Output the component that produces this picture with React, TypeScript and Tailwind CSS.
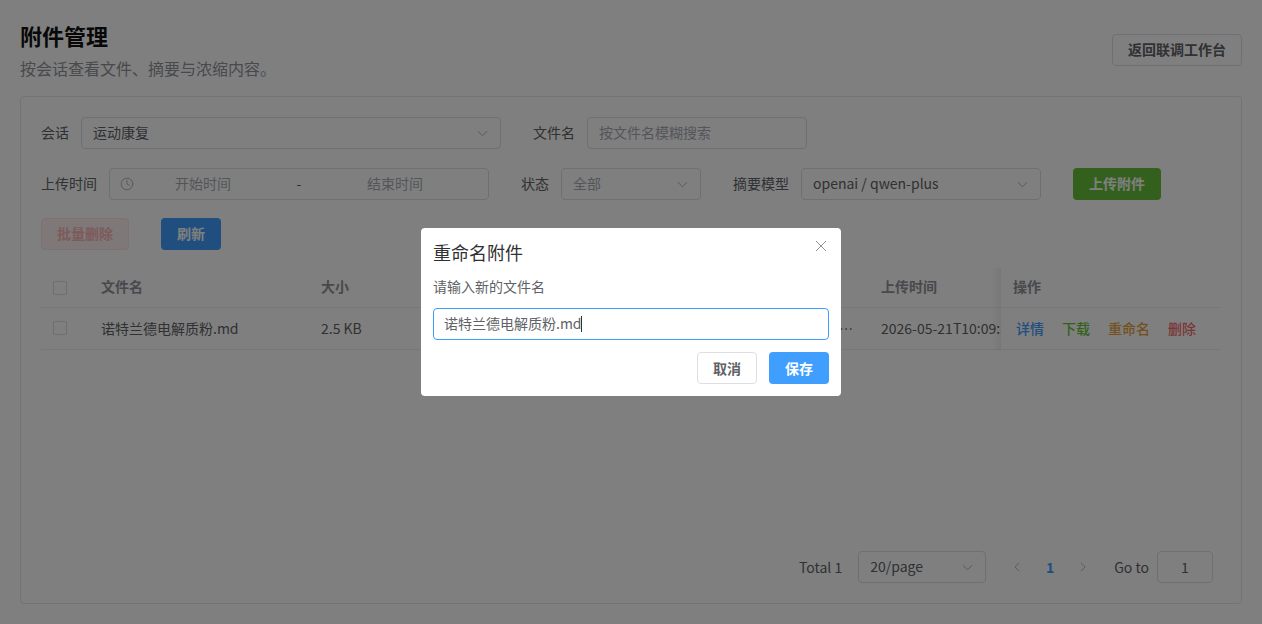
import { Clock } from "lucide-react";

function Arrow({ className }: { className?: string }) {
  return (
    <svg viewBox="0 0 12 7" fill="none" stroke="currentColor" strokeWidth="1" className={className}>
      <path d="M1 1l5 5 5-5" />
    </svg>
  );
}

function Select({ value, width, muted }: { value: string; width: string; muted?: boolean }) {
  return (
    <div className={`${width} h-8 flex items-center justify-between pl-[11px] pr-3 border border-[#dcdfe6] rounded ${muted ? "text-[#a8abb2]" : "text-[#606266]"}`}>
      <span className="pb-[2px]">{value}</span>
      <Arrow className="w-[11px] h-[7px] text-[#a8abb2]" />
    </div>
  );
}

function Field({ label, children }: { label: string; children: React.ReactNode }) {
  return (
    <div className="flex items-center gap-3">
      <span className="text-[#606266] pb-[2px]">{label}</span>
      {children}
    </div>
  );
}

export default function App() {
  return (
    <div className="h-screen overflow-hidden flex flex-col p-5 bg-white text-sm font-['Noto_Sans_CJK_SC','Noto_Sans',sans-serif]">
      {/* Header */}
      <div className="flex items-start justify-between h-[76px]">
        <div>
          <h1 className="text-[22px] leading-[30px] font-semibold text-[#111]">附件管理</h1>
          <p className="text-base leading-[24px] mt-[6px] text-[#909399]">按会话查看文件、摘要与浓缩内容。</p>
        </div>
        <button className="mt-[14px] h-8 w-[130px] pb-[2px] border border-[#dcdfe6] rounded text-[#606266] font-semibold">返回联调工作台</button>
      </div>

      {/* Card */}
      <div className="flex-1 flex flex-col border border-[#e4e7ed] rounded px-5 pt-5 pb-5">
        <div className="flex gap-8">
          <Field label="会话">
            <Select value="运动康复" width="w-[420px]" />
          </Field>
          <Field label="文件名">
            <div className="w-[220px] h-8 flex items-center px-[11px] pb-[2px] border border-[#dcdfe6] rounded text-[#a8abb2]">按文件名模糊搜索</div>
          </Field>
        </div>

        <div className="flex gap-8 mt-[19px]">
          <Field label="上传时间">
            <div className="w-[380px] h-8 flex items-center pl-[10px] border border-[#dcdfe6] rounded text-[#a8abb2]">
              <Clock className="w-[14px] h-[14px]" strokeWidth={1.5} />
              <span className="w-[136px] ml-px pb-[2px] text-center">开始时间</span>
              <span className="w-[56px] pb-[2px] text-center text-[#606266]">-</span>
              <span className="w-[136px] pb-[2px] text-center">结束时间</span>
            </div>
          </Field>
          <Field label="状态">
            <Select value="全部" width="w-[140px]" muted />
          </Field>
          <Field label="摘要模型">
            <Select value="openai / qwen-plus" width="w-[240px]" />
          </Field>
          <button className="h-8 w-[88px] pb-[2px] rounded bg-[#67c23a] text-white font-semibold">上传附件</button>
        </div>

        <div className="flex gap-8 mt-[18px]">
          <button className="h-8 w-[88px] pb-[2px] rounded border border-[#fde2e2] bg-[#fef0f0] text-[#fab6b6] font-semibold">批量删除</button>
          <button className="h-8 w-[60px] pb-[2px] rounded bg-[#409eff] text-white font-semibold">刷新</button>
        </div>

        {/* Table */}
        <div className="relative mt-[18px] text-[#606266]">
          <div className="flex items-center h-10 pb-[3px] border-b border-[#ebeef5] font-semibold text-[#909399]">
            <div className="w-12 pl-3 pt-[3px]"><span className="block w-[14px] h-[14px] border border-[#dcdfe6] rounded-[2px]" /></div>
            <div className="w-[220px] pl-3">文件名</div>
            <div className="w-[120px] pl-3">大小</div>
            <div className="w-[440px]" />
            <div className="w-[132px] pl-3">上传时间</div>
            <div className="flex-1 pl-3">操作</div>
          </div>
          <div className="flex items-center h-[42px] pb-px border-b border-[#ebeef5]">
            <div className="w-12 pl-3"><span className="block w-[14px] h-[14px] border border-[#dcdfe6] rounded-[2px]" /></div>
            <div className="w-[220px] pl-3">诺特兰德电解质粉.md</div>
            <div className="w-[120px] pl-3">2.5 KB</div>
            <div className="w-[440px] pr-4 text-right">…</div>
            <div className="w-[132px] pl-3 overflow-hidden whitespace-nowrap">2026-05-21T10:09:30</div>
            <div className="flex-1 flex gap-[18px] pl-[15px] font-medium">
              <span className="text-[#409eff]">详情</span>
              <span className="text-[#67c23a]">下载</span>
              <span className="text-[#e6a23c]">重命名</span>
              <span className="text-[#f56c6c]">删除</span>
            </div>
          </div>
          <div className="absolute top-0 bottom-0 left-[950px] w-[10px] bg-gradient-to-r from-transparent to-black/[.06]" />
        </div>

        {/* Pagination */}
        <div className="mt-auto flex items-center justify-end pr-2 text-[#606266]">
          <span className="pb-px">Total 1</span>
          <div className="ml-[16px]"><Select value="20/page" width="w-[128px]" /></div>
          <svg viewBox="0 0 7 12" fill="none" stroke="currentColor" className="ml-[28px] w-[6px] h-[10px] text-[#a8abb2]"><path d="M6 1L1 6l5 5" /></svg>
          <span className="w-[60px] text-center font-bold text-[#409eff]">1</span>
          <svg viewBox="0 0 7 12" fill="none" stroke="currentColor" className="w-[6px] h-[10px] text-[#a8abb2]"><path d="M1 1l5 5-5 5" /></svg>
          <span className="ml-[28px] pb-px">Go to</span>
          <div className="ml-2 w-14 h-8 flex items-center justify-center pb-px border border-[#dcdfe6] rounded">1</div>
        </div>
      </div>

      {/* Dialog */}
      <div className="fixed inset-0 bg-black/50 flex items-start justify-center pt-[228px]">
        <div className="relative w-[420px] h-[168px] bg-white rounded p-3">
          <h2 className="text-lg leading-[24px] text-[#303133]">重命名附件</h2>
          <svg viewBox="0 0 12 12" fill="none" stroke="currentColor" className="absolute top-3 right-[14px] w-3 h-3 text-[#909399]"><path d="M1 1l10 10M11 1L1 11" /></svg>
          <p className="mt-[11px] leading-[22px] text-[#606266]">请输入新的文件名</p>
          <div className="mt-[11px] h-8 flex items-center px-[10px] border border-[#409eff] rounded text-[#606266]">
            <span className="pb-[2px]">诺特兰德电解质粉.md</span><span className="-ml-px w-px h-4 bg-[#303133]" />
          </div>
          <div className="mt-3 flex justify-end gap-3">
            <button className="h-8 w-[60px] pb-px border border-[#dcdfe6] rounded text-[#606266] font-semibold">取消</button>
            <button className="h-8 w-[60px] pb-px rounded bg-[#409eff] text-white font-semibold">保存</button>
          </div>
        </div>
      </div>
    </div>
  );
}
